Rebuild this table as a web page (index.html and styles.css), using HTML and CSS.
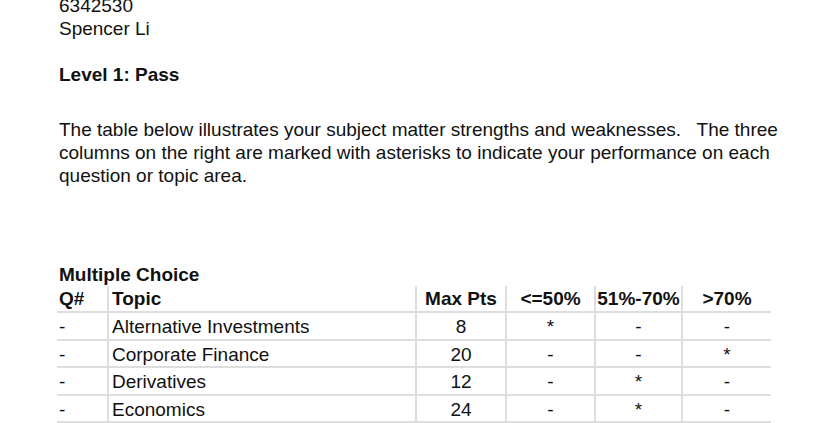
FILE: index.html
```html
<!DOCTYPE html>
<html>
<head>
<meta charset="utf-8">
<link rel="stylesheet" href="styles.css">
</head>
<body>
<div class="page">
  <div class="line">6342530</div>
  <div class="line">Spencer Li</div>
  <div class="level">Level 1: Pass</div>
  <p class="intro">The table below illustrates your subject matter strengths and weaknesses.&nbsp;&nbsp; The three columns on the right are marked with asterisks to indicate your performance on each question or topic area.</p>
  <div class="section">Multiple Choice</div>
  <table class="scores">
    <colgroup>
      <col class="c-q"><col class="c-topic"><col class="c-max"><col class="c-p"><col class="c-p2"><col class="c-p">
    </colgroup>
    <thead>
      <tr><th class="left">Q#</th><th class="left topic">Topic</th><th>Max Pts</th><th>&lt;=50%</th><th>51%-70%</th><th class="last">&gt;70%</th></tr>
    </thead>
    <tbody>
      <tr><td class="left">-</td><td class="left topic">Alternative Investments</td><td>8</td><td>*</td><td>-</td><td class="last">-</td></tr>
      <tr><td class="left">-</td><td class="left topic">Corporate Finance</td><td>20</td><td>-</td><td>-</td><td class="last">*</td></tr>
      <tr><td class="left">-</td><td class="left topic">Derivatives</td><td>12</td><td>-</td><td>*</td><td class="last">-</td></tr>
      <tr><td class="left">-</td><td class="left topic">Economics</td><td>24</td><td>-</td><td>*</td><td class="last">-</td></tr>
    </tbody>
  </table>
</div>
</body>
</html>
```
FILE: styles.css
```css
html, body {
  margin: 0;
  padding: 0;
  background: #ffffff;
}
body {
  font-family: "Liberation Sans", Arial, sans-serif;
  font-size: 19px;
  line-height: 23px;
  color: #111111;
}
.page {
  margin-top: -6px;
  padding-left: 59px;
}
.line {
  height: 23px;
}
.level {
  margin-top: 23px;
  font-weight: bold;
}
.intro {
  margin: 32px 0 0 0;
  width: 730px;
}
.section {
  margin-top: 76px;
  font-weight: bold;
}
.scores {
  margin-left: -2px;
  border-collapse: collapse;
  table-layout: fixed;
  width: 714px;
}
.c-q { width: 51px; }
.c-topic { width: 308px; }
.c-max { width: 90px; }
.c-p { width: 89px; }
.c-p2 { width: 87px; }
.scores th,
.scores td {
  padding: 0;
  text-align: center;
  vertical-align: middle;
  border-right: 2px solid #dedede;
  border-bottom: 2px solid #dedede;
  white-space: nowrap;
}
.scores th {
  height: 25px;
  font-weight: bold;
}
.scores td {
  height: 23.5px;
  padding-top: 2px;
}
.scores .left {
  text-align: left;
  padding-left: 2px;
}
.scores .topic {
  padding-left: 3px;
}
.scores .last {
  border-right: none;
}
```
